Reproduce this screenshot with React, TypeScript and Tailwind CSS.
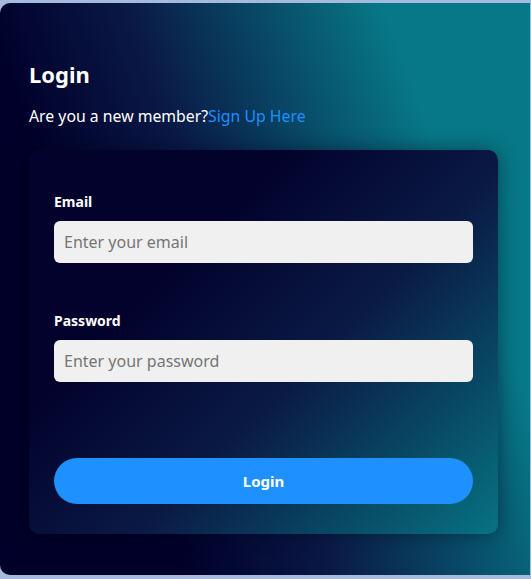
export default function App() {
  return (
    <div
      className="min-h-[579px] w-full bg-[#a5badc] pt-[3px]"
      style={{ fontFamily: '"Comic Sans MS", "Noto Sans", sans-serif' }}
    >
      <div className="h-[572px] w-[530px] rounded-l-[10px] bg-[linear-gradient(70deg,#00002a_25%,#0a1845_45%,#077887_80%)] px-[29px] pt-[53px]">
        <h1 className="text-[22px] font-bold leading-[36px] text-white">Login</h1>
        <p className="mt-[14px] text-[15.8px] leading-[20px] text-white">
          Are you a new member?
          <a href="#" className="text-[#1e90ff]">
            Sign Up Here
          </a>
        </p>

        <form
          className="mt-[24px] flex h-[384px] w-[469px] flex-col rounded-[10px] bg-[linear-gradient(135deg,#02022c_30%,#0a1a45_58%,#077382_100%)] px-[25px] pt-[42px] shadow-[0_0_20px_rgba(0,0,20,0.45)]"
          onSubmit={(e) => e.preventDefault()}
        >
          <label className="text-[14px] font-bold leading-[20px] text-white">Email</label>
          <input
            type="email"
            placeholder="Enter your email"
            className="mt-[9px] h-[42px] w-full rounded-[6px] bg-[#f0f0f0] px-[10px] text-[16px] text-[#333] outline-none placeholder:text-[#757575]"
          />

          <label className="mt-[48px] text-[14px] font-bold leading-[20px] text-white">Password</label>
          <input
            type="password"
            placeholder="Enter your password"
            className="mt-[9px] h-[42px] w-full rounded-[6px] bg-[#f0f0f0] px-[10px] text-[16px] text-[#333] outline-none placeholder:text-[#757575]"
          />

          <button
            type="submit"
            className="mt-[76px] h-[46px] w-full rounded-full bg-[#1e90ff] text-[15px] font-bold text-white"
          >
            Login
          </button>
        </form>
      </div>
    </div>
  );
}
